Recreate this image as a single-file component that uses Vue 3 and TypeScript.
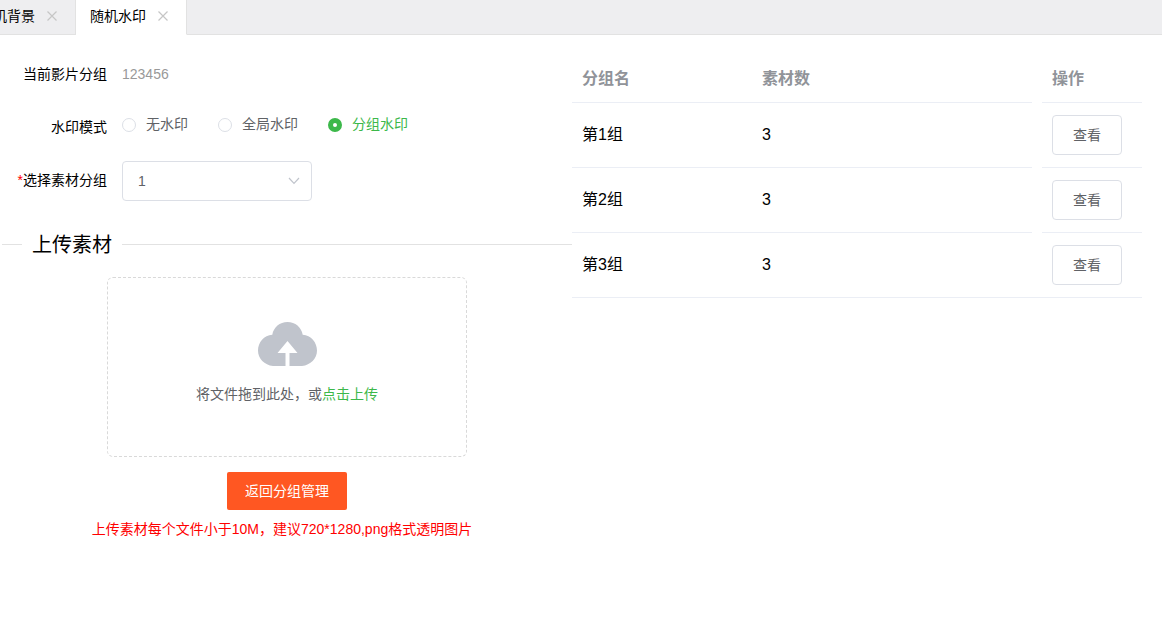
<script setup lang="ts">
import { ref } from 'vue'

interface Tab {
  title: string
  active: boolean
}

interface Mode {
  value: string
  label: string
}

interface Group {
  name: string
  count: number
}

const tabs: Tab[] = [
  { title: '随机背景', active: false },
  { title: '随机水印', active: true },
]

const modes: Mode[] = [
  { value: 'none', label: '无水印' },
  { value: 'global', label: '全局水印' },
  { value: 'group', label: '分组水印' },
]

const groups: Group[] = [
  { name: '第1组', count: 3 },
  { name: '第2组', count: 3 },
  { name: '第3组', count: 3 },
]

const mode = ref('group')
const selectedGroup = ref('1')
</script>

<template>
  <div class="page">
    <nav class="tabs">
      <div v-for="tab in tabs" :key="tab.title" class="tab" :class="{ active: tab.active }">
        <a href="#" class="tab-title">{{ tab.title }}</a>
        <button type="button" class="tab-close" :aria-label="'关闭' + tab.title">
          <svg width="10" height="10" viewBox="0 0 10 10">
            <path d="M0.5 0.5 9.5 9.5M9.5 0.5 0.5 9.5" fill="none" stroke="#c6c6c6" stroke-width="1.2" />
          </svg>
        </button>
      </div>
    </nav>

    <main class="content">
      <section class="editor">
        <form class="form" @submit.prevent>
          <div class="row">
            <span class="row-label">当前影片分组</span>
            <span class="row-text">123456</span>
          </div>
          <div class="row">
            <span id="mode-label" class="row-label">水印模式</span>
            <div class="radios" role="radiogroup" aria-labelledby="mode-label">
              <label v-for="item in modes" :key="item.value" class="radio" :class="{ checked: mode === item.value }">
                <input v-model="mode" type="radio" name="mode" :value="item.value" />
                <span class="radio-text">{{ item.label }}</span>
              </label>
            </div>
          </div>
          <div class="row">
            <label class="row-label" for="group"><span class="required">*</span>选择素材分组</label>
            <div class="select">
              <select id="group" v-model="selectedGroup">
                <option value="1">1</option>
                <option value="2">2</option>
                <option value="3">3</option>
              </select>
              <svg class="chevron" width="12" height="8" viewBox="0 0 12 8">
                <path d="M1 1 6 6.3 11 1" fill="none" stroke="#c0c4cc" stroke-width="1.2" />
              </svg>
            </div>
          </div>
        </form>

        <fieldset class="upload">
          <legend>上传素材</legend>
          <label class="dropzone">
            <input type="file" multiple accept="image/png" />
            <svg width="59" height="44" viewBox="0 0 59 44">
              <path
                fill="#c0c4cc"
                d="M27.5 44H15C6.5 43 0 36.500 0 28.500C0 20.300 6 13.500 14.300 12.800C15.500 5.300 21.800 0 29.500 0C37.200 0 43.500 5.300 44.700 12.800C53 13.500 59 20.300 59 28.500C59 36.500 52.500 43 44 44H31.500V31H39.500L29.500 19L19.500 31H27.500Z"
              />
            </svg>
            <span class="drop-text">将文件拖到此处，或<em>点击上传</em></span>
          </label>
          <button type="button" class="back">返回分组管理</button>
          <p class="hint">上传素材每个文件小于10M，建议720*1280,png格式透明图片</p>
        </fieldset>
      </section>

      <table class="groups">
        <colgroup>
          <col class="col-name" />
          <col />
          <col class="col-action" />
        </colgroup>
        <thead>
          <tr>
            <th scope="col">分组名</th>
            <th scope="col">素材数</th>
            <th scope="col" class="action">操作</th>
          </tr>
        </thead>
        <tbody>
          <tr v-for="group in groups" :key="group.name">
            <td>{{ group.name }}</td>
            <td>{{ group.count }}</td>
            <td class="action"><button type="button" class="view">查看</button></td>
          </tr>
        </tbody>
      </table>
    </main>
  </div>
</template>

<style>
body {
  background: #fff;
}
</style>

<style scoped>
.page,
.page * {
  box-sizing: border-box;
}

.page {
  overflow: hidden;
  font-family: 'Liberation Sans', 'Noto Sans CJK SC', sans-serif;
  font-size: 14px;
  line-height: 20px;
  color: #000;
}

button,
select {
  font: inherit;
}

.tabs {
  display: flex;
  height: 35px;
  margin-left: -35px;
  background: #eeeef0;
  border-bottom: 1px solid #e2e2e2;
}

.tab {
  display: flex;
  align-items: center;
  gap: 12px;
  height: 35px;
  padding: 0 18px 3px 14px;
  border-right: 1px solid #e2e2e2;
  border-bottom: 1px solid #e2e2e2;
}

.tab.active {
  background: #fff;
  border-bottom-color: #fff;
}

.tab-title {
  color: #000;
  text-decoration: none;
}

.tab-close {
  display: flex;
  padding: 0;
  border: 0;
  background: none;
}

.content {
  display: grid;
  grid-template-columns: 1fr 1fr;
  align-items: start;
  padding: 20px 20px 0 2px;
}

.form {
  display: grid;
  gap: 14px;
}

.row {
  display: flex;
  align-items: center;
  gap: 15px;
  height: 39px;
}

.row-label {
  width: 105px;
  padding-bottom: 2px;
  text-align: right;
  white-space: nowrap;
}

.row-text {
  padding-bottom: 2px;
  color: #999;
}

.required {
  color: #f00;
}

.radios {
  display: flex;
  gap: 30px;
  padding-bottom: 6px;
}

.radio {
  display: flex;
  align-items: center;
  gap: 10px;
  color: #606266;
}

.radio-text {
  padding-bottom: 2px;
}

.radio.checked {
  color: #3cb84a;
}

.radio input {
  appearance: none;
  width: 14px;
  height: 14px;
  margin: 0;
  border: 1px solid #dcdfe6;
  border-radius: 50%;
  background: #fff;
}

.radio input:checked {
  border: 5px solid #3cb84a;
}

.select {
  position: relative;
  width: 190px;
}

.select select {
  appearance: none;
  display: block;
  width: 100%;
  height: 40px;
  padding: 0 30px 0 15px;
  border: 1px solid #dcdfe6;
  border-radius: 4px;
  background: #fff;
  color: #606266;
}

.chevron {
  position: absolute;
  top: 16px;
  right: 12px;
  pointer-events: none;
}

.upload {
  display: flex;
  flex-direction: column;
  align-items: center;
  min-width: 0;
  margin: 30px 0 0;
  padding: 19px 0 0;
  border: 0;
  border-top: 1px solid #e2e2e2;
}

.upload legend {
  margin-left: 20px;
  padding: 2px 10px 0;
  font-size: 20px;
  line-height: 26px;
}

.dropzone {
  display: flex;
  flex-direction: column;
  align-items: center;
  gap: 18px;
  width: 360px;
  max-width: 100%;
  height: 180px;
  padding-top: 44px;
  border: 1px dashed #d9d9d9;
  border-radius: 6px;
}

.dropzone input {
  position: absolute;
  width: 1px;
  height: 1px;
  opacity: 0;
}

.drop-text {
  color: #606266;
}

.drop-text em {
  font-style: normal;
  color: #3cb84a;
}

.back {
  height: 38px;
  margin-top: 15px;
  padding: 0 18px;
  border: 0;
  border-radius: 2px;
  background: #ff5722;
  color: #fff;
}

.hint {
  margin: 9px 0 0;
  padding-right: 10px;
  color: #f00;
}

.groups {
  width: 100%;
  table-layout: fixed;
  border-collapse: separate;
  border-spacing: 0;
  font-size: 16px;
  line-height: 24px;
}

.col-name {
  width: 180px;
}

.col-action {
  width: 110px;
}

.groups th,
.groups td {
  padding: 0 10px;
  text-align: left;
  background: linear-gradient(#ebeef5, #ebeef5) right bottom / 100% 1px no-repeat;
}

.groups th {
  height: 48px;
  color: #909399;
}

.groups td {
  height: 65px;
  padding-bottom: 2px;
}

.groups .action {
  padding-left: 20px;
  background-size: calc(100% - 10px) 1px;
}

.groups tbody tr:last-child td.action {
  background-size: 100% 1px;
}

.view {
  display: block;
  width: 70px;
  height: 40px;
  padding: 0;
  border: 1px solid #dcdfe6;
  border-radius: 4px;
  background: #fff;
  color: #606266;
  font-size: 14px;
}
</style>
